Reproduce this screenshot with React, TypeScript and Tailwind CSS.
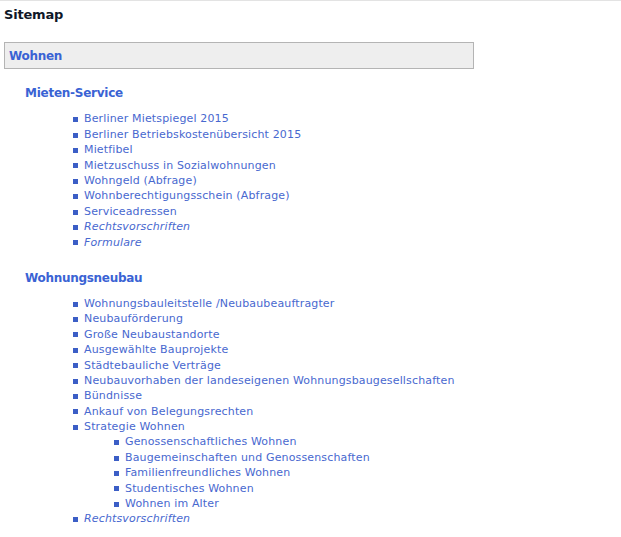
const mieten = [
  { label: "Berliner Mietspiegel 2015" },
  { label: "Berliner Betriebskostenübersicht 2015" },
  { label: "Mietfibel" },
  { label: "Mietzuschuss in Sozialwohnungen" },
  { label: "Wohngeld (Abfrage)" },
  { label: "Wohnberechtigungsschein (Abfrage)" },
  { label: "Serviceadressen" },
  { label: "Rechtsvorschriften", italic: true },
  { label: "Formulare", italic: true },
]

const neubau = [
  { label: "Wohnungsbauleitstelle /Neubaubeauftragter" },
  { label: "Neubauförderung" },
  { label: "Große Neubaustandorte" },
  { label: "Ausgewählte Bauprojekte" },
  { label: "Städtebauliche Verträge" },
  { label: "Neubauvorhaben der landeseigenen Wohnungsbaugesellschaften" },
  { label: "Bündnisse" },
  { label: "Ankauf von Belegungsrechten" },
  {
    label: "Strategie Wohnen",
    children: [
      "Genossenschaftliches Wohnen",
      "Baugemeinschaften und Genossenschaften",
      "Familienfreundliches Wohnen",
      "Studentisches Wohnen",
      "Wohnen im Alter",
    ],
  },
  { label: "Rechtsvorschriften", italic: true },
]

type Item = { label: string; italic?: boolean; children?: string[] }

function Entry({ label, italic }: { label: string; italic?: boolean }) {
  return (
    <div className="flex items-center h-[15.4px]">
      <span className="w-[5px] h-[5px] bg-[#3b5ec6] mr-[6px] shrink-0" />
      <a href="#" className={`text-[#4868cf] whitespace-nowrap tracking-[0.15px] ${italic ? "italic" : ""}`}>
        {label}
      </a>
    </div>
  )
}

function LinkList({ items }: { items: Item[] }) {
  return (
    <ul className="pl-[73px]">
      {items.map((item, i) => (
        <li key={i}>
          <Entry label={item.label} italic={item.italic} />
          {item.children && (
            <ul className="pl-[41px]">
              {item.children.map((c) => (
                <li key={c}>
                  <Entry label={c} />
                </li>
              ))}
            </ul>
          )}
        </li>
      ))}
    </ul>
  )
}

export default function App() {
  return (
    <div
      className="w-[621px] h-[537px] bg-white border-t border-[#e3e3e3] text-[11px] overflow-hidden"
      style={{ fontFamily: '"DejaVu Sans", Verdana, sans-serif' }}
    >
      <h1 className="pl-[4px] pt-[5px] text-[13px] font-bold text-[#101828] leading-[17px] tracking-[-0.2px]">Sitemap</h1>

      {/* Section box */}
      <div className="ml-[4px] mt-[19px] w-[470px] h-[27px] border border-[#b4b4b4] bg-[#eeeeee] flex items-center pl-[4px]">
        <span className="text-[12px] font-bold text-[#3a63d4] tracking-[-0.3px]">Wohnen</span>
      </div>

      <h2 className="pl-[25px] mt-[17px] text-[12px] font-bold text-[#3a63d4] tracking-[-0.25px] leading-[15px]">
        Mieten-Service
      </h2>
      <div className="mt-[11px]">
        <LinkList items={mieten} />
      </div>

      <h2 className="pl-[25px] mt-[20px] text-[12px] font-bold text-[#3a63d4] tracking-[-0.3px] leading-[15px]">
        Wohnungsneubau
      </h2>
      <div className="mt-[11px]">
        <LinkList items={neubau} />
      </div>
    </div>
  )
}
